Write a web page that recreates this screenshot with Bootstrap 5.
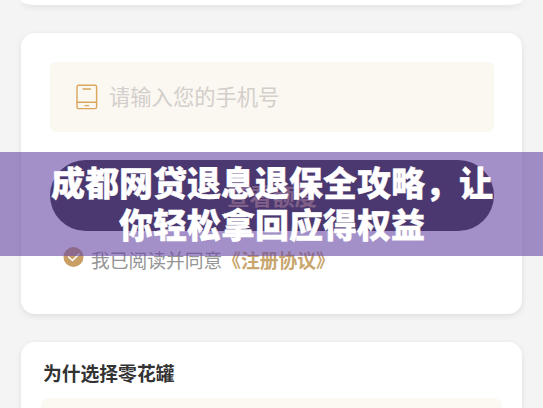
<!DOCTYPE html>
<html lang="zh-CN">
<head>
    <meta charset="UTF-8">
    <meta name="viewport" content="width=device-width, initial-scale=1">
    <title>成都网贷退息退保全攻略</title>
    <link href="https://cdn.jsdelivr.net/npm/bootstrap@5.3.0/dist/css/bootstrap.min.css" rel="stylesheet">
    <style>
        body {
            height: 408px;
            background-color: #f4f4f4;
            font-family: "Noto Sans CJK SC", sans-serif;
        }
        .page-wrap {
            height: 408px;
            padding: 0 21px;
            gap: 28px;
        }
        .panel {
            border: 0;
            border-radius: 14px;
            box-shadow: 0 2px 6px rgba(0, 0, 0, .09);
        }
        .panel-top {
            height: 5px;
            border-radius: 0 0 14px 14px / 0 0 5px 5px;
        }
        .panel-form {
            height: 281px;
            padding: 29px 28px 0 29px;
        }
        .panel-why {
            height: 66px;
            padding: 17px 20px 0;
            border-radius: 14px 14px 0 0;
        }
        .phone-field {
            height: 70px;
            padding-left: 26px;
            gap: 11px;
            border-radius: 6px;
            background-color: #fbf7f1;
            color: #d3cfcc;
            font-size: 21.3px;
            line-height: 30px;
        }
        .phone-field span {
            margin-top: -2px;
        }
        .btn-quota {
            height: 71px;
            margin-top: 28px;
            border-radius: 36px;
            background-color: #252523;
            color: #a9865f;
            font-size: 22.5px;
            font-weight: 700;
        }
        .agree-row {
            height: 28px;
            margin: 15px 0 0 13px;
            color: #959595;
            font-size: 18.75px;
        }
        .agree-row svg {
            margin: -2px 7px 0 0;
        }
        .agree-row a {
            color: #c8a66e;
            font-weight: 700;
        }
        .why-title {
            margin-bottom: 11px;
            padding-left: 2px;
            font-size: 18.8px;
            line-height: 28px;
            color: #333;
        }
        .why-box {
            height: 10px;
            border-radius: 8px 8px 0 0;
            background-color: #fbf9f1;
        }
        /* title band over the page */
        .title-band {
            top: 152px;
            height: 104px;
            padding: 9px 0 0 1px;
            background-color: rgba(102, 70, 163, .6);
            color: #fff;
            font-size: 34px;
            font-weight: 900;
            line-height: 42px;
            -webkit-text-stroke: .4px #fff;
        }
    </style>
</head>
<body class="overflow-hidden position-relative">
<div class="page-wrap d-flex flex-column">
    <div class="card panel panel-top flex-shrink-0"></div>

    <!-- phone form -->
    <div class="card panel panel-form flex-shrink-0">
        <div class="phone-field d-flex align-items-center">
            <svg width="22" height="26" viewBox="0 0 22 26" fill="none" stroke="#d9a65c" stroke-width="1.4" stroke-linecap="round">
                <rect x="1" y="1.2" width="19.6" height="23.4" rx="1.6"/>
                <path d="M1 18.3h19.6M7 5h7.5M9 21.6h3.6"/>
            </svg>
            <span>请输入您的手机号</span>
        </div>
        <button type="button" class="btn btn-quota w-100 border-0">查看额度</button>
        <div class="agree-row d-flex align-items-center">
            <svg width="21" height="28" viewBox="0 0 21 28">
                <circle cx="10.5" cy="12" r="10" fill="#c99f66"/>
                <path d="M5.2 11.5l4.3 4 7-7" fill="none" stroke="#fff" stroke-width="1.6"/>
            </svg>
            <span>我已阅读并同意</span><a href="#" class="text-decoration-none">《注册协议》</a>
        </div>
    </div>

    <!-- why choose us -->
    <div class="card panel panel-why flex-shrink-0 overflow-hidden">
        <h5 class="why-title fw-bold">为什选择零花罐</h5>
        <div class="why-box"></div>
    </div>
</div>

<div class="title-band position-absolute start-0 w-100 text-center">成都网贷退息退保全攻略，让<br>你轻松拿回应得权益</div>

<script src="https://cdn.jsdelivr.net/npm/bootstrap@5.3.0/dist/js/bootstrap.bundle.min.js"></script>
</body>
</html>
